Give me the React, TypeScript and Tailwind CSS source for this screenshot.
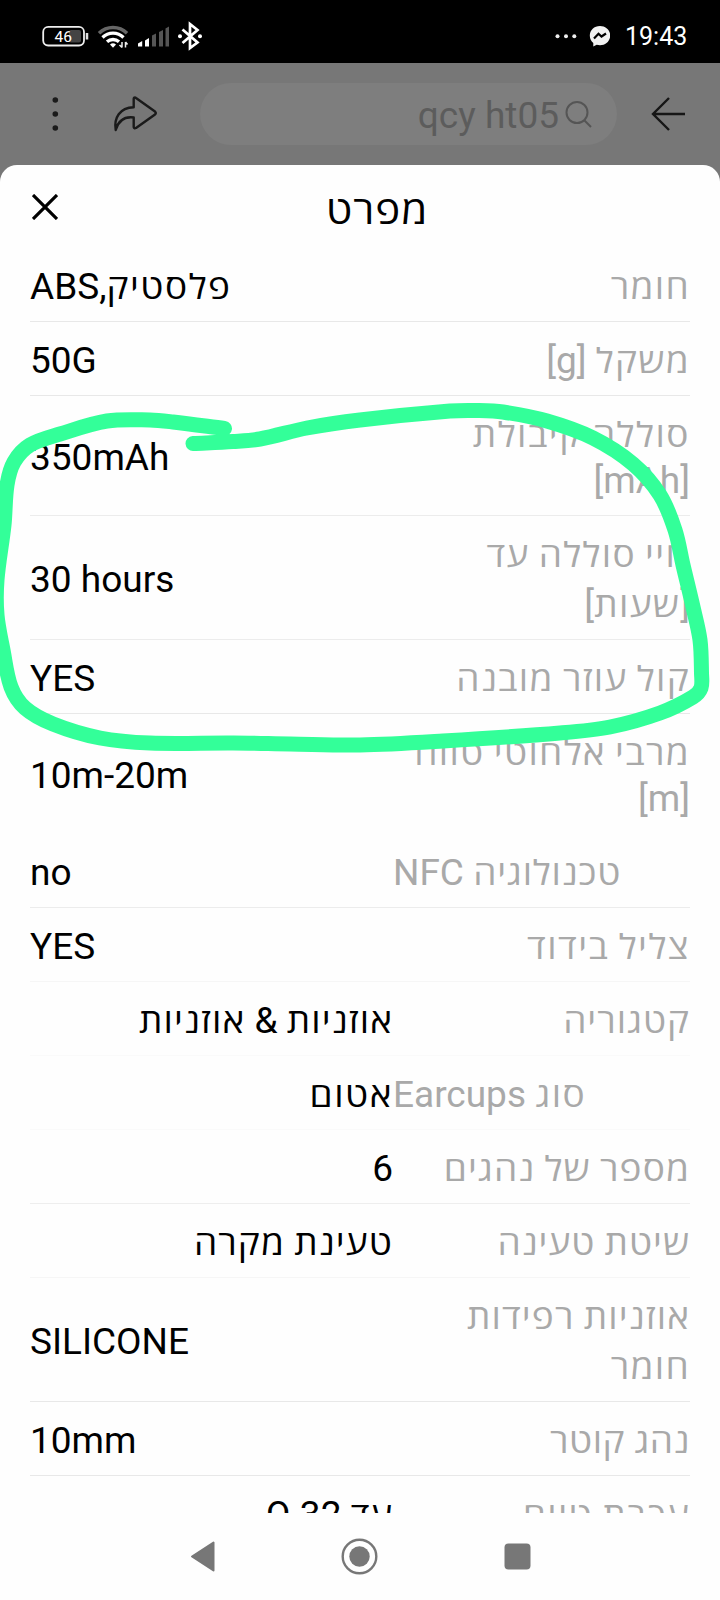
import React from "react";

type Line = { text: string; tracking?: string };

type Row = {
  label: Line[];
  value: Line;
  height: string;
  side?: "left" | "right";
  labelLeft?: boolean;
  line: string;
};

const T5 = "tracking-[0.5px]";
const T8 = "tracking-[0.8px]";
const T9 = "tracking-[0.95px]";
const T10 = "tracking-[1.1px]";
const T12 = "tracking-[1.3px]";
const T14 = "tracking-[1.5px]";

const rows: Row[] = [
  { label: [{ text: "חומר", tracking: T12 }], value: { text: "פלסטיק,ABS", tracking: T14 }, height: "h-[74px]", line: "border-[#e8e8e8]" },
  { label: [{ text: "משקל [g]", tracking: T12 }], value: { text: "50G" }, height: "h-[74px]", line: "border-[#e8e8e8]" },
  { label: [{ text: "סוללה קיבולת", tracking: T14 }, { text: "[mAh]" }], value: { text: "350mAh" }, height: "h-[120px]", line: "border-[#ececec]" },
  { label: [{ text: "חיי סוללה עד", tracking: T12 }, { text: "[שעות]", tracking: T12 }], value: { text: "30 hours" }, height: "h-[124px]", line: "border-[#ececec]" },
  { label: [{ text: "קול עוזר מובנה", tracking: T12 }], value: { text: "YES" }, height: "h-[74px]", line: "border-[#e8e8e8]" },
  { label: [{ text: "מרבי אלחוטי טווח", tracking: T12 }, { text: "[m]" }], value: { text: "10m-20m" }, height: "h-[120px]", line: "border-transparent" },
  { label: [{ text: "טכנולוגיה NFC", tracking: T8 }], value: { text: "no" }, height: "h-[74px]", labelLeft: true, line: "border-[#ececec]" },
  { label: [{ text: "צליל בידוד", tracking: T14 }], value: { text: "YES" }, height: "h-[74px]", line: "border-[#f6f6f6]" },
  { label: [{ text: "קטגוריה", tracking: T9 }], value: { text: "אוזניות & אוזניות", tracking: T10 }, height: "h-[74px]", side: "right", line: "border-[#fafafa]" },
  { label: [{ text: "סוג Earcups", tracking: T14 }], value: { text: "אטום", tracking: T14 }, height: "h-[74px]", side: "right", labelLeft: true, line: "border-[#fafafa]" },
  { label: [{ text: "מספר של נהגים", tracking: T10 }], value: { text: "6" }, height: "h-[74px]", side: "right", line: "border-[#eeeeee]" },
  { label: [{ text: "שיטת טעינה", tracking: T9 }], value: { text: "טעינת מקרה", tracking: T10 }, height: "h-[74px]", side: "right", line: "border-[#f6f6f6]" },
  { label: [{ text: "אוזניות רפידות", tracking: T10 }, { text: "חומר", tracking: T12 }], value: { text: "SILICONE" }, height: "h-[124px]", line: "border-[#e8e8e8]" },
  { label: [{ text: "נהג קוטר", tracking: T5 }], value: { text: "10mm" }, height: "h-[74px]", line: "border-[#e8e8e8]" },
  { label: [{ text: "עכבת טווח", tracking: T12 }], value: { text: "עד 32 Ω", tracking: T9 }, height: "h-[74px]", side: "right", line: "border-transparent" },
];

// Hebrew runs are set a little lower and wider than the Latin ones beside them.
function Mixed({ line }: { line: Line }) {
  const hebrew = /[\u0590-\u05FF]/;
  if (!hebrew.test(line.text)) {
    return <bdi dir="ltr">{line.text}</bdi>;
  }
  return (
    <>
      {line.text.split(/([\u0590-\u05FF]+)/).map((part, i) =>
        hebrew.test(part) ? (
          <span key={i} className={`inline-block origin-[50%_76%] scale-y-[0.92] ${line.tracking ?? ""}`}>{part}</span>
        ) : (
          <span key={i}>{part}</span>
        ),
      )}
    </>
  );
}

function SpecRow({ row }: { row: Row }) {
  const lead = row.height === "h-[120px]" ? "leading-[46px]" : "leading-[50px]";
  return (
    <div className={`flex shrink-0 items-center border-b pt-[4px] ${row.height} ${row.line}`}>
      <div
        dir="rtl"
        className={`w-[297px] shrink-0 whitespace-nowrap text-[#a9a9a9] ${row.labelLeft ? "text-left" : "text-right"}`}
      >
        {row.label.map((l) => (
          <div key={l.text} className={lead}><Mixed line={l} /></div>
        ))}
      </div>
      <div
        dir="rtl"
        className={`flex-1 whitespace-nowrap leading-[50px] text-black ${row.side === "right" ? "text-right" : "text-left"}`}
      >
        <Mixed line={row.value} />
      </div>
    </div>
  );
}

function StatusBar() {
  return (
    <div className="flex h-[63px] shrink-0 items-center justify-between bg-black pl-[42px] pr-[34px] pt-[9px]">
      <svg width="162" height="30" viewBox="42 21 162 30" fill="none">
        <rect x="43.2" y="26.9" width="40.8" height="18.6" rx="5" stroke="#eee" strokeWidth="1.8" />
        <rect x="69" y="30" width="12" height="12.500" rx="2" fill="#444" />
        <path d="M87 33v6.500" stroke="#ddd" strokeWidth="2.500" />
        <text x="63.200" y="42" textAnchor="middle" fontSize="15.500" fill="#fff" className="font-[Roboto]">46</text>
        <path d="M99 33.200a20 20 0 0 1 28 0" stroke="#666" strokeWidth="3.500" />
        <path d="M102.500 37.500a15 15 0 0 1 21 0M107 41.800a9 9 0 0 1 12 0" stroke="#fff" strokeWidth="3.300" />
        <path d="M110 44.500q3-2.400 6 0L113 47.700z" fill="#fff" />
        <path d="M122 42v5.500M119.500 45L122 47.500M125.500 47.500V42M125.500 42l2 2.500" stroke="#eee" strokeWidth="1.500" />
        <path d="M138 46.500v-3l4.200-2.500v5.500zM145 46.500v-6l4-2.500v8.500z" fill="#fff" />
        <path d="M152 46.500V35.500l4-2v13zM159 46.500V32l4-2v16.500zM165.500 46.500V28.500l3.500-2v20z" fill="#555" />
        <path d="M182.500 29.500l15 13-7.500 5.500V24l7.500 6-15 13" stroke="#fff" strokeWidth="2.700" />
        <circle cx="180" cy="36.200" r="2" fill="#fff" />
        <circle cx="200" cy="36.200" r="2" fill="#fff" />
      </svg>
      <div className="flex items-center">
        <svg width="56" height="24" viewBox="554 24 56 24">
          <circle cx="557.500" cy="36.200" r="2" fill="#eee" />
          <circle cx="566" cy="36.200" r="2" fill="#eee" />
          <circle cx="574.300" cy="36.200" r="2" fill="#eee" />
          <path d="M600 26c-5.800 0-10.200 4.200-10.200 9.600 0 3.100 1.300 5.700 3.500 7.500v3.400l3.400-1.700c1 .3 2.200.5 3.300.5 5.800 0 10.200-4.200 10.200-9.700S605.800 26 600 26z" fill="#f2f2f2" />
          <path d="M594 38.500l4.500-4.700 3 2.700 4.500-3" stroke="#000" strokeWidth="2.200" fill="none" />
        </svg>
        <span className="ml-[15px] mt-[2px] w-[61px] whitespace-nowrap font-[Roboto] text-[25px] leading-[30px] text-white">19:43</span>
      </div>
    </div>
  );
}

function SearchHeader() {
  return (
    <div className="flex h-[102px] shrink-0 items-center bg-[#777777]">
      <svg className="shrink-0" width="200" height="102" viewBox="0 63 200 102" fill="none">
        <circle cx="55.300" cy="100" r="2.800" fill="#1a1a1a" />
        <circle cx="55.300" cy="114" r="2.800" fill="#1a1a1a" />
        <circle cx="55.300" cy="128" r="2.800" fill="#1a1a1a" />
        <path d="M134 97.800q1-.6 2 .2l19 13.500q1.500 1.500 0 3L136 128q-2 .8-2.300-1v-9.500c-8-1-15 2-18 12.500-2-12 4-22.500 18-22.800v-8.400z" stroke="#1a1a1a" strokeWidth="2.400" strokeLinejoin="round" />
      </svg>
      <div className="flex h-[62px] w-[417px] items-center justify-end rounded-full bg-[#7e7e7e] pr-[25px] text-[37px] text-[#5c5c5c]">
        <span className="mt-[4px] whitespace-nowrap leading-[44px]">qcy ht05</span>
        <svg className="ml-[6px]" width="27" height="30" viewBox="0 0 27 30" fill="none">
          <circle cx="12" cy="13.500" r="10.500" stroke="#555" strokeWidth="2" />
          <path d="M19 21l7 7" stroke="#555" strokeWidth="2" />
        </svg>
      </div>
      <svg className="ml-[34px]" width="36" height="36" viewBox="651 96 36 36" fill="none">
        <path d="M685 114h-32M669 98l-16 16 16 16" stroke="#161616" strokeWidth="2.400" />
      </svg>
    </div>
  );
}

function NavBar() {
  return (
    <div className="flex h-[87px] shrink-0 bg-[#fefefe]">
      <svg width="720" height="87" viewBox="0 1513 720 87">
        <path d="M213.500 1542.500v28l-21.500-14z" fill="#777" stroke="#777" strokeWidth="2" strokeLinejoin="round" />
        <circle cx="359.500" cy="1556.500" r="16.800" fill="none" stroke="#777" strokeWidth="2.400" />
        <circle cx="359.500" cy="1556.500" r="10.200" fill="#777" />
        <rect x="504.500" y="1543.500" width="26" height="26" rx="4" fill="#777" />
      </svg>
    </div>
  );
}

const marker: [number, number][] = [
  [193, 443.5], [233, 441.5], [260, 439], [307, 428], [360, 420], [450, 411], [477, 410.5], [503, 412],
  [547, 421], [593, 438], [633, 464], [660, 495], [675, 530], [683, 565], [693, 607], [700, 640],
  [701.5, 673], [701, 688], [693, 697], [660, 713], [610, 727], [560, 733], [443, 741], [360, 745],
  [290, 744], [233, 743], [150, 743], [100, 738], [53, 724], [25, 708], [11, 687], [3, 650],
  [-3, 615], [-3, 580], [4, 525], [7, 485], [14, 462], [30, 445], [60, 434], [107, 421],
  [150, 420], [173, 422], [224.5, 428.5],
];

// Catmull-Rom spline through the points, written as cubic Bézier segments.
function smooth(p: [number, number][]) {
  let d = `M${p[0][0]} ${p[0][1]}`;
  for (let i = 0; i < p.length - 1; i++) {
    const a = p[Math.max(i - 1, 0)];
    const b = p[i];
    const c = p[i + 1];
    const e = p[Math.min(i + 2, p.length - 1)];
    const k = Math.hypot(c[0] - b[0], c[1] - b[1]);
    const kb = k / (Math.hypot(b[0] - a[0], b[1] - a[1]) + k || 1) / 3;
    const kc = k / (Math.hypot(e[0] - c[0], e[1] - c[1]) + k || 1) / 3;
    d += `C${b[0] + (c[0] - a[0]) * kb} ${b[1] + (c[1] - a[1]) * kb} ${c[0] - (e[0] - b[0]) * kc} ${c[1] - (e[1] - b[1]) * kc} ${c[0]} ${c[1]}`;
  }
  return d;
}

export default function App() {
  return (
    <div className="relative flex h-[1600px] w-[720px] flex-col overflow-hidden bg-[#777777] font-[Roboto,'Open_Sans','DejaVu_Sans',sans-serif] text-[37px]">
      <StatusBar />
      <SearchHeader />
      <main className="flex h-[1348px] flex-col overflow-hidden rounded-t-[17px] bg-[#fefefe]">
        <header className="flex h-[83px] shrink-0 items-center pl-[32px]">
          <svg width="26" height="26" viewBox="0 0 26 26">
            <path d="M1 1l24 24M25 1L1 25" stroke="#000" strokeWidth="3.200" />
          </svg>
          <h1 className="ml-[268px] mt-[7px] origin-[50%_76%] scale-y-[0.92] text-[42px] leading-[50px] tracking-[1px] text-black">מפרט</h1>
        </header>
        <section className="flex flex-row-reverse">
          <div className="mr-[30px] flex w-[660px] flex-col" dir="rtl">
            {rows.map((row) => (
              <SpecRow key={row.label[0].text} row={row} />
            ))}
          </div>
        </section>
      </main>
      <NavBar />
      <svg className="pointer-events-none absolute left-0 top-0" width="720" height="1600" viewBox="0 0 720 1600" fill="none">
        <path d={smooth(marker)} stroke="#33ff99" strokeWidth="15" strokeLinecap="round" strokeLinejoin="round" />
      </svg>
    </div>
  );
}
